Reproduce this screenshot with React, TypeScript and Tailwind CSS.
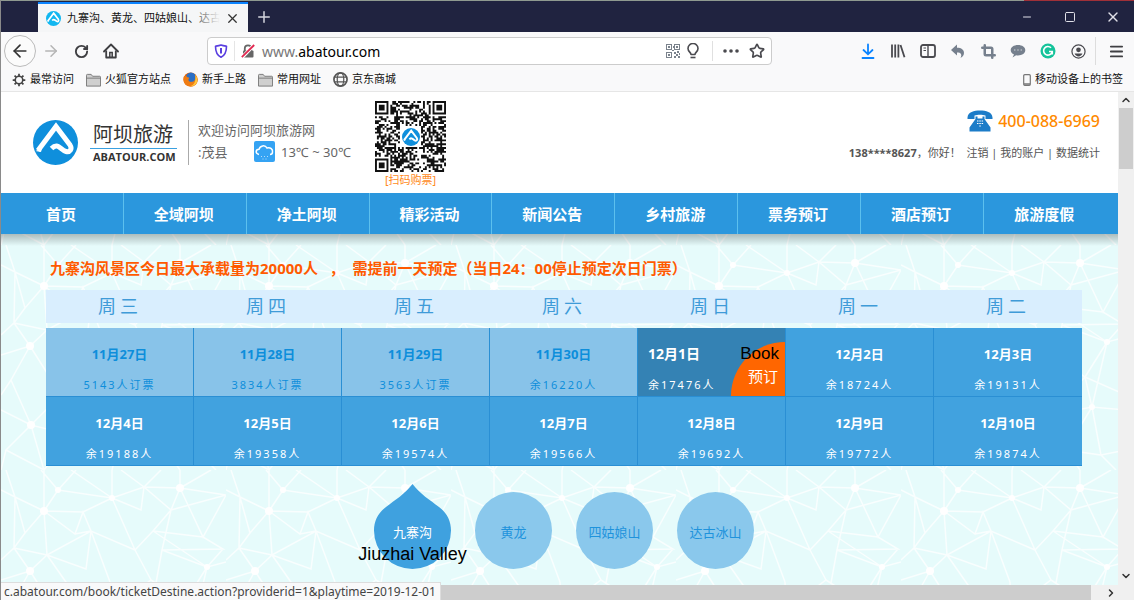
import React from 'react';
import { ArrowLeft, ArrowRight, ChevronDown, ChevronRight, ChevronUp, Crop, Menu, Minus, Plus, RotateCw, Square, Star, X } from 'lucide-react';

const navItems = ['首页', '全域阿坝', '净土阿坝', '精彩活动', '新闻公告', '乡村旅游', '票务预订', '酒店预订', '旅游度假'];

const weekdays = ['周三', '周四', '周五', '周六', '周日', '周一', '周二'];

interface Day {
  date: string;
  count: string;
  state?: 'past' | 'active';
}

const weeks: Day[][] = [
  [
    { date: '11月27日', count: '5143人订票', state: 'past' },
    { date: '11月28日', count: '3834人订票', state: 'past' },
    { date: '11月29日', count: '3563人订票', state: 'past' },
    { date: '11月30日', count: '余16220人', state: 'past' },
    { date: '12月1日', count: '余17476人', state: 'active' },
    { date: '12月2日', count: '余18724人' },
    { date: '12月3日', count: '余19131人' },
  ],
  [
    { date: '12月4日', count: '余19188人' },
    { date: '12月5日', count: '余19358人' },
    { date: '12月6日', count: '余19574人' },
    { date: '12月7日', count: '余19566人' },
    { date: '12月8日', count: '余19692人' },
    { date: '12月9日', count: '余19772人' },
    { date: '12月10日', count: '余19874人' },
  ],
];

function LogoMark({ className, color = '#0f8fdc' }: { className: string; color?: string }) {
  return (
    <svg viewBox="0 0 45 45" className={className} aria-hidden="true">
      <circle cx="22.5" cy="22.5" r="22.5" fill={color} />
      <path
        d="M5 30.5 L23 6.5 L37 25 C39.5 29 37 32.5 33 31.5 C29 30.5 27 26.500 24 26 C21.500 25.500 20 27 18.500 28.500"
        fill="none"
        stroke="#fff"
        strokeWidth="5"
        strokeLinejoin="miter"
      />
      <path d="M2.500 31 L9 28 L8 32Z" fill="#fff" />
    </svg>
  );
}

function Folder() {
  return (
    <svg viewBox="0 0 16 14" className="h-[14px] w-[15px]" fill="#cfcfcf" stroke="#777" strokeWidth="1">
      <path d="M.5 13.500V2A1 1 0 0 1 1.500 1h4l1.500 2h7.500a1 1 0 0 1 1 1v9.500z" />
      <path d="M.5 5h15" />
    </svg>
  );
}

function Firefox() {
  return (
    <svg viewBox="0 0 16 16" className="h-[15px] w-[15px]">
      <circle cx="8" cy="8" r="7.500" fill="#e66000" />
      <circle cx="8.500" cy="6" r="5.500" fill="#2b6fc4" />
      <path d="M.8 5C2 3.500 3.500 4 4.500 5.500c2 0 2.500 1 1.500 2-1 1.500 1 3.500 3.500 3 3-.5 4.500-3 3.500-7.500 3.500 3.500 3.300 8 .5 10.500-3.500 3-9 2.500-11.500-1C.3 10 .2 7.500.8 5z" fill="#ef7b12" />
      <path d="M13 3c3 3.500 3 8 .3 10.300-1.500 1.500-4 2-5.300 1.700 4-1 6-5 5-12z" fill="#ffc63b" />
    </svg>
  );
}

function Gear() {
  return (
    <svg viewBox="0 0 16 16" className="h-[14px] w-[14px]" fill="none" stroke="#444">
      <circle cx="8" cy="8" r="4.300" strokeWidth="1.800" />
      <path d="M8 .8v2.700M8 12.500v2.700M.8 8h2.700M12.500 8h2.700M2.900 2.900l1.900 1.900M11.200 11.200l1.900 1.900M2.900 13.100l1.900-1.900M11.200 4.800l1.900-1.900" strokeWidth="2" />
    </svg>
  );
}

function Globe() {
  return (
    <svg viewBox="0 0 16 16" className="h-[15px] w-[15px]" fill="none" stroke="#555" strokeWidth="1.300">
      <circle cx="8" cy="8" r="7" strokeWidth="1.800" />
      <ellipse cx="8" cy="8" rx="3.500" ry="7" />
      <path d="M1.500 5.500h13M1.500 10.500h13" />
    </svg>
  );
}

function HomeIcon() {
  return (
    <svg viewBox="0 0 16 16" className="h-4 w-4" fill="none" stroke="#3f3f42" strokeWidth="1.800">
      <path d="M1 8.500 8 1.500l7 7" strokeLinecap="round" strokeLinejoin="round" />
      <path d="M3.200 7.500v7h9.600v-7" strokeLinejoin="round" />
      <path d="M6.800 14V9.500h2.400V14" strokeWidth="1.500" />
    </svg>
  );
}

function TrackingShield() {
  return (
    <svg viewBox="0 0 14 14" className="h-[14px] w-[14px]" fill="none" stroke="#5a3fe0" strokeWidth="1.600">
      <path d="M7 1C5 1.800 3 2 1.500 2.200c0 5.300.8 8.800 5.500 11 4.700-2.200 5.500-5.700 5.500-11C11 2 9 1.800 7 1z" strokeLinejoin="round" />
      <path d="M7 4v5.500" strokeWidth="2" />
    </svg>
  );
}

function InsecureLock() {
  return (
    <svg viewBox="0 0 14 14" className="h-[14px] w-[14px]" fill="none">
      <path d="M3.800 7V4.500a3.200 3.200 0 0 1 6.400 0V7" stroke="#666" strokeWidth="1.800" />
      <rect x="2" y="6.500" width="10.500" height="7" rx="1" fill="#666" />
      <path d="M1 13.500 13 1" stroke="#fff" strokeWidth="3.500" />
      <path d="M.8 13.200 13.200 1" stroke="#e22850" strokeWidth="1.800" />
    </svg>
  );
}

function SmallQr() {
  return (
    <svg viewBox="0 0 14 14" className="h-[14px] w-[14px]" fill="#7a828c">
      <path d="M0 0h6v6H0zM1 1v4h4V1zM8 0h6v6H8zM9 1v4h4V1zM0 8h6v6H0zM1 9v4h4V9z" fillRule="evenodd" />
      <path d="M2 2h2v2H2zM10 2h2v2h-2zM2 10h2v2H2zM7 2h1v2H7zM8 8h2v2H8zM11 7h2v2h-2zM10 10h2v2h-2zM12 12h2v2h-2zM8 12h2v2H8zM13 9h1v2h-1zM6 6h2v1H6z" />
    </svg>
  );
}

function Bulb() {
  return (
    <svg viewBox="0 0 14 16" className="h-4 w-[14px]" fill="none" stroke="#4a4a4f" strokeWidth="1.600">
      <path d="M5 11.500C5 9.500 2 8.500 2 5.500a5 5 0 0 1 10 0c0 3-3 4-3 6z" strokeLinejoin="round" />
      <path d="M4.500 14.500h5" />
    </svg>
  );
}

function ToolbarIcons() {
  return (
    <>
      <button aria-label="下载" className="flex w-[30px] justify-center">
        <svg viewBox="0 0 16 16" className="h-4 w-4" fill="none" stroke="#0a84ff" strokeWidth="1.800" strokeLinecap="round">
          <path d="M8 1.500v9.500M3.500 7 8 11.300 12.500 7M2.500 15h11" />
        </svg>
      </button>
      <button aria-label="书库" className="flex w-[30px] justify-center">
        <svg viewBox="0 0 16 16" className="h-4 w-4" fill="none" stroke="#4a4a4f" strokeWidth="1.800">
          <path d="M2 1.500v13M5.200 1.500v13M8.400 1.500v13M10.500 2l4 12.300" />
        </svg>
      </button>
      <button aria-label="侧栏" className="flex w-[30px] justify-center">
        <svg viewBox="0 0 16 16" className="h-4 w-4" fill="none" stroke="#4a4a4f" strokeWidth="1.800">
          <rect x="1" y="2" width="14" height="12" rx="2" />
          <path d="M8 2v12" strokeWidth="1.400" />
          <path d="M3.500 5h2.500M3.500 7.500h2.500" strokeWidth="1" />
        </svg>
      </button>
      <button aria-label="撤销" className="flex w-[30px] justify-center">
        <svg viewBox="0 0 16 16" className="h-4 w-4" fill="#76808d">
          <path d="M7 1.500v3.300c4.500 0 7 2 7 5.200 0 2.200-1.500 4-3.500 5 1.800-3.500.5-5.500-3.500-5.500V12.500L1 7z" />
        </svg>
      </button>
      <button aria-label="截图" className="flex w-[30px] justify-center">
        <Crop className="h-[15px] w-[15px] text-[#76808d]" strokeWidth={4} />
      </button>
      <button aria-label="消息" className="flex w-[30px] justify-center">
        <svg viewBox="0 0 16 16" className="h-4 w-4">
          <path d="M8 2c4.200 0 7.300 2.200 7.300 5.200S12.200 12.400 8 12.400c-.7 0-1.300 0-1.900-.2L2.500 14.500 4 11.500C2 10.500.7 9 .7 7.200.7 4.200 3.800 2 8 2z" fill="#76808d" />
          <path d="M4.300 6.600h1v1h-1zM7.500 6.600h1v1h-1zM10.700 6.600h1v1h-1z" fill="#f9f9fa" />
        </svg>
      </button>
      <button aria-label="语法检查" className="flex w-[30px] justify-center">
        <svg viewBox="0 0 16 16" className="h-4 w-4" fill="none">
          <circle cx="8" cy="8" r="7.500" fill="#15c39a" />
          <path d="M11 4.800A4.300 4.300 0 1 0 12 9.200M9 8.500h3.300v3" stroke="#fff" strokeWidth="1.600" />
        </svg>
      </button>
      <button aria-label="账户" className="flex w-[30px] justify-center">
        <svg viewBox="0 0 16 16" className="h-[15px] w-[15px]" fill="none">
          <circle cx="8" cy="8" r="7" stroke="#4a4a4f" strokeWidth="1.300" />
          <circle cx="8" cy="6.200" r="2.500" fill="#4a4a4f" />
          <path d="M3.800 10.200h8.400c-.8 2-2.300 3-4.200 3s-3.400-1-4.200-3z" fill="#4a4a4f" />
        </svg>
      </button>
    </>
  );
}

const QR_SIZE = 37;

function inFinder(x: number, y: number) {
  return (x < 8 && y < 8) || (x > QR_SIZE - 9 && y < 8) || (x < 8 && y > QR_SIZE - 9);
}

function QrCode() {
  const cells: string[] = [];
  let seed = 20191;
  for (let y = 0; y < QR_SIZE; y++) {
    for (let x = 0; x < QR_SIZE; x++) {
      seed = (seed * 16807) % 2147483647;
      const center = x > 12 && x < 24 && y > 12 && y < 24;
      if (!inFinder(x, y) && !center && seed / 2147483647 < 0.52) cells.push(`M${x} ${y}h1v1h-1z`);
    }
  }
  const finder = (x: number, y: number) => `M${x} ${y}h7v7h-7zm1 1v5h5v-5zm1 1h3v3h-3z`;
  return (
    <div className="relative h-[71px] w-[71px]">
      <svg viewBox={`0 0 ${QR_SIZE} ${QR_SIZE}`} className="h-full w-full" role="img" aria-label="扫码购票">
        <path d={cells.join('')} fill="#111" />
        <path d={finder(0, 0) + finder(QR_SIZE - 7, 0) + finder(0, QR_SIZE - 7)} fill="#111" fillRule="evenodd" />
      </svg>
      <span className="absolute inset-0 flex items-center justify-center">
        <LogoMark className="h-[18px] w-[18px]" />
      </span>
    </div>
  );
}

// Repeating net of white lines behind the booking area
function NetBackground() {
  return (
    <svg className="absolute inset-0 h-full w-full" aria-hidden="true">
      <defs>
        <pattern id="net" width="225" height="225" patternUnits="userSpaceOnUse" patternTransform="translate(0 11)">
          <g stroke="#fff" strokeWidth="1.500" fill="none" strokeOpacity=".75">
            <path d="M43 41 57 20 111 28 143 17 179 18 225 25M43 41 14 27 0 20M43 41 82 42 111 28M43 41 74 64 82 42 90 61 74 64M43 41 24 63 14 27 13 78 24 63M43 41 46 85 90 61 134 80 111 28 140 40 143 17 170 40 179 18 202 67 225 25 170 40 152 61 134 80M170 40 161 80 222 79 202 67 152 61 206 97 161 80 155 113M13 78 46 85 85 99 90 61 109 112M46 85 29 101 13 78 0 90M46 85 67 115M134 80 150 110M206 97 222 79M206 97 184 132 191 162 206 97 225 92M29 101 0 110M29 101 10 135 30 180 60 150 29 101M10 135 0 150M30 180 0 165M30 180 5 205 43 225 30 180 70 190 60 150 110 140 67 115M70 190 43 225M5 205 0 225M109 112 110 140 150 110 184 132 150 170 110 140 120 190 70 190M150 170 120 190 165 205 191 162 150 170M165 205 200 210 191 162 225 165M200 210 225 205M184 132 225 150M165 205 179 225M120 190 111 225M200 210 215 225M43 0 43 41M111 0 111 28M111 28 70 0M57 20 40 0M57 20 75 0M143 17 120 0M143 17 160 0M179 18 179 0M179 18 210 0M14 27 5 0" />
          </g>
          <g fill="#fff">
            <circle cx="43" cy="41" r="4" />
            <circle cx="179" cy="18" r="4" />
            <circle cx="29" cy="101" r="4" />
            <circle cx="30" cy="180" r="4" />
            <circle cx="57" cy="20" r="3" />
            <circle cx="111" cy="28" r="3" />
            <circle cx="206" cy="97" r="3" />
            <circle cx="191" cy="162" r="3" />
          </g>
        </pattern>
      </defs>
      <rect width="100%" height="100%" fill="url(#net)" />
    </svg>
  );
}

function BrowserChrome() {
  return (
    <>
      <div className="flex h-px bg-[#8f9a90]">
        <span className="ml-auto w-[110px] bg-[#a03038]" />
      </div>
      <div className="flex h-[31px] items-stretch bg-[#202340] pl-[37px]">
        <div className="mt-px flex w-[210px] items-center border-t-2 border-[#0a84ff] bg-[#f5f6f7] pr-2 pl-2">
          <LogoMark className="h-[15px] w-[15px] shrink-0" color="#12b7f0" />
          <span className="relative ml-[6px] flex-1 overflow-hidden text-[11px] whitespace-nowrap text-[#111]">
            九寨沟、黄龙、四姑娘山、达古
            <span className="absolute inset-y-0 right-0 w-8 bg-linear-to-r from-transparent to-[#f5f6f7]" />
          </span>
          <button aria-label="关闭标签页" className="ml-[5px]">
            <X className="h-[15px] w-[15px] text-[#333]" />
          </button>
        </div>
        <button aria-label="新标签页" className="flex w-8 items-center justify-center">
          <Plus className="h-[18px] w-[18px] text-[#d5d6de]" />
        </button>
        <div className="ml-auto flex text-[#e0e0e8]">
          <button aria-label="最小化" className="flex w-[43px] items-center justify-center">
            <Minus className="h-3 w-3" />
          </button>
          <button aria-label="最大化" className="flex w-[43px] items-center justify-center">
            <Square className="h-3 w-3" />
          </button>
          <button aria-label="关闭" className="flex w-[43px] items-center justify-center">
            <X className="h-4 w-4" />
          </button>
        </div>
      </div>

      <div className="flex h-[38px] items-center bg-[#f9f9fa] pl-[3px]">
        <button aria-label="后退" className="flex h-8 w-8 items-center justify-center rounded-full border border-[#bbb] bg-[#fbfbfb]">
          <ArrowLeft className="h-5 w-5 text-[#333]" />
        </button>
        <button aria-label="前进" className="flex w-[30px] justify-center">
          <ArrowRight className="h-[18px] w-[18px] text-[#b5b5b5]" />
        </button>
        <button aria-label="刷新" className="flex w-[30px] justify-center">
          <RotateCw className="h-[15px] w-[15px] text-[#3f3f42]" strokeWidth={3} />
        </button>
        <button aria-label="主页" className="flex w-[30px] justify-center">
          <HomeIcon />
        </button>
        <div className="mx-[81px] flex h-7 flex-1 items-center rounded-sm border border-[#ccc] bg-white px-[6px]">
          <TrackingShield />
          <span className="mx-[6px] h-5 w-px bg-[#e5e5e5]" />
          <InsecureLock />
          <label htmlFor="url" className="ml-[7px] text-[14px] text-[#777]">www.</label>
          <input id="url" type="text" defaultValue="abatour.com" className="min-w-0 flex-1 text-[14px] text-black outline-none" />
          <SmallQr />
          <span className="w-[6px]" />
          <Bulb />
          <span className="mr-[10px] ml-3 h-5 w-px bg-[#e0e0e0]" />
          <svg viewBox="0 0 16 4" className="h-1 w-4" fill="#4a4a4f">
            <circle cx="2" cy="2" r="1.800" />
            <circle cx="8" cy="2" r="1.800" />
            <circle cx="14" cy="2" r="1.800" />
          </svg>
          <Star className="ml-[10px] h-4 w-4 text-[#4a4a4f]" strokeWidth={2.5} />
        </div>
        <ToolbarIcons />
        <span className="mx-[2px] h-7 w-px bg-[#ddd]" />
        <button aria-label="菜单" className="flex w-[36px] justify-center">
          <Menu className="h-[17px] w-[17px] text-[#3f3f42]" strokeWidth={2.5} />
        </button>
      </div>

      <div className="flex h-[22px] items-center gap-3 border-b border-[#e6e6e6] bg-[#f9f9fa] pr-[11px] pb-[2px] pl-[11px] text-[11px] text-[#111]">
        <a href="#" className="flex items-center gap-1"><Gear />最常访问</a>
        <a href="#" className="flex items-center gap-1"><Folder />火狐官方站点</a>
        <a href="#" className="flex items-center gap-1"><Firefox />新手上路</a>
        <a href="#" className="flex items-center gap-1"><Folder />常用网址</a>
        <a href="#" className="flex items-center gap-1"><Globe />京东商城</a>
        <a href="#" className="ml-auto flex items-center gap-1">
          <svg viewBox="0 0 8 12" className="h-3 w-2" fill="none" stroke="#777">
            <rect x=".7" y=".7" width="6.600" height="10.600" rx="1" strokeWidth="1.200" />
            <path d="M1 10h6" strokeWidth="1.500" />
          </svg>
          移动设备上的书签
        </a>
      </div>
    </>
  );
}

function SiteHeader() {
  return (
    <header className="flex h-[101px] items-center bg-white pr-[18px] pl-8">
      <a href="#" className="flex items-center gap-3 text-[#333]">
        <LogoMark className="h-[45px] w-[45px]" />
        <span className="flex w-[87px] flex-col">
          <span className="border-b border-[#3aa0e0] px-[3px] text-[20px] leading-[26px] whitespace-nowrap">阿坝旅游</span>
          <span className="px-[3px] font-['Open_Sans',sans-serif] text-[11px] leading-[15px] font-bold">ABATOUR.COM</span>
        </span>
      </a>
      <div className="ml-[11px] h-[45px] border-l border-[#aaa]" />
      <div className="ml-[9px] w-[177px] pb-1 leading-[22px] text-[#666]">
        <p className="text-[13px]">欢迎访问阿坝旅游网</p>
        <div className="flex items-center text-[13px]">
          <span className="w-14">:茂县</span>
          <svg viewBox="0 0 21 21" className="h-[21px] w-[21px]">
            <rect width="21" height="21" rx="2" fill="#35a3f3" />
            <path d="M5 13.500C1 12.500 1.500 8.500 5 8.300 6 4.500 11 3.500 13 7c3.500-1 6 1.500 5.500 4 0 1.500-1 2.500-2.500 2.500" fill="none" stroke="#fff" strokeWidth="1.500" />
            <path d="M7 15.500h1M10 15.500h1M13 15.500h1M8.500 18h1M11.500 18h1" stroke="#b5dcfa" />
          </svg>
          <span className="ml-[6px] whitespace-nowrap">13℃ ~ 30℃</span>
        </div>
      </div>
      <div className="flex flex-col items-center pt-1">
        <QrCode />
        <a href="#" className="text-[11px] leading-4 text-[#ff8a1c]">[扫码购票]</a>
      </div>
      <div className="ml-auto flex flex-col items-end pb-3 text-[11px] leading-8 text-[#555]">
        <p className="flex items-center gap-[5px] text-[16px] font-medium text-[#ff8a00]">
          <svg viewBox="0 0 26 22" className="h-[22px] w-[26px]" fill="#1c7cc8">
            <path d="M.5 7.500C1 2 7 .5 13 .5S25 2 25.500 7.500V9h-7V5.500c-3-1-8-1-11 0V9h-7z" />
            <path d="M8.500 6.500h2v2h5v-2h2V9l6 8.500V21.500h-21V17.500L8.500 9z" />
            <path d="M10 11h1.500M12.300 11h1.500M14.600 11h1.500M10 13.500h1.500M12.300 13.500h1.500M14.600 13.500h1.500M12.300 16h1.500" stroke="#fff" strokeWidth="1.200" />
          </svg>
          400-088-6969
        </p>
        <p className="whitespace-nowrap">
          <b>138****8627</b>，你好！ &nbsp;<a href="#">注销</a> | <a href="#">我的账户</a> | <a href="#">数据统计</a>
        </p>
      </div>
    </header>
  );
}

function DayCell({ day }: { day: Day }) {
  if (day.state === 'active') {
    return (
      <td className="relative h-[69px] border-r border-b border-[#2a8fd4] bg-[#3482b4] p-0 pl-[10px] text-left align-top text-white">
        <p className="mt-4 text-[14px] leading-5 font-bold">{day.date}</p>
        <p className="mt-[11px] text-[11px] leading-5 tracking-[2px]">{day.count}</p>
        <button className="absolute right-0 bottom-0 flex h-[54px] w-[54px] items-end justify-end rounded-tl-full bg-[#ff6600] pr-[7px] pb-[10px] text-[15px] leading-5 text-white">
          预订
        </button>
        <span className="absolute top-4 right-[6px] font-['Liberation_Sans',sans-serif] text-[17px] leading-5 text-black">Book</span>
      </td>
    );
  }
  const past = day.state === 'past';
  return (
    <td
      className={`h-[69px] border-r border-b border-[#2a8fd4] p-0 text-center align-top last:border-r-0 ${
        past ? 'bg-[#88c3e9] text-[#0d8edb]' : 'bg-[#41a2df] text-white'
      }`}
    >
      <p className="mt-4 text-[13px] leading-5 font-bold">{day.date}</p>
      <p className="mt-[11px] text-[11px] leading-5 tracking-[2px]">{day.count}</p>
    </td>
  );
}

function Booking() {
  return (
    <main className="relative flex-1 overflow-hidden bg-[#e6fbfb]">
      <NetBackground />
      <div className="absolute inset-x-0 top-0 h-3 bg-linear-to-b from-black/25 to-transparent" />
      <div className="relative pt-6 pr-9 pl-[45px]">
        <p className="mb-3 pl-1 text-[15px] leading-5 font-bold whitespace-nowrap text-[#ff5a00]">
          九寨沟风景区今日最大承载量为20000人&nbsp;&nbsp; ，&nbsp; 需提前一天预定（当日24：00停止预定次日门票）
        </p>
        <table className="w-full table-fixed border-separate border-spacing-0">
          <thead>
            <tr>
              {weekdays.map((d) => (
                <th key={d} className="h-[38px] border-b-[5px] border-transparent bg-[#d9eefe] bg-clip-padding p-0 text-[18px] font-normal tracking-[4px] text-[#3f9bd8]">
                  {d}
                </th>
              ))}
            </tr>
          </thead>
          <tbody>
            {weeks.map((week) => (
              <tr key={week[0].date}>
                {week.map((day) => (
                  <DayCell key={day.date} day={day} />
                ))}
              </tr>
            ))}
          </tbody>
        </table>
        <div className="mt-[18px] flex items-end justify-center gap-6 text-[13px] text-[#1f93dc]">
          <button className="relative h-[85px] w-[77px] text-white">
            <svg viewBox="0 0 77 85" className="absolute inset-0 h-full w-full" fill="#3fa1df">
              <path d="M38.500 0C46 10 56 16 65 23c8 6 12 14 12 23.500A38.500 38.500 0 0 1 0 46.500C0 37 4 29 12 23 21 16 31 10 38.500 0z" />
            </svg>
            <span className="relative block pt-3">九寨沟</span>
            <span className="absolute top-[60px] left-1/2 -translate-x-1/2 font-['Liberation_Sans',sans-serif] text-[18px] leading-5 whitespace-nowrap text-black">
              Jiuzhai Valley
            </span>
          </button>
          {['黄龙', '四姑娘山', '达古冰山'].map((name) => (
            <button key={name} className="h-[77px] w-[77px] rounded-full bg-[#8ac8ec] pt-1 whitespace-nowrap">
              {name}
            </button>
          ))}
        </div>
      </div>
    </main>
  );
}

export default function App() {
  return (
    <div className="relative flex h-screen flex-col overflow-hidden border-l border-[#8a8a8a] bg-white font-['Noto_Sans','Noto_Sans_CJK_SC',sans-serif]">
      <BrowserChrome />
      <div className="flex min-h-0 flex-1">
        <div className="flex min-w-0 flex-1 flex-col">
          <SiteHeader />
          <nav className="flex h-[41px] bg-[#2b97dd] text-[15px] font-bold text-white">
            {navItems.map((item) => (
              <a key={item} href="#" className="flex w-[11%] items-center justify-center border-r border-[#5cc0ee] pt-[2px] pr-[2px] last:border-r-0">
                {item}
              </a>
            ))}
          </nav>
          <Booking />
        </div>
        <div className="flex w-4 flex-col items-center bg-[#f0f0f0] text-[#333]">
          <ChevronUp className="my-[2px] h-3 w-3" strokeWidth={3} />
          <div className="h-[61px] w-[14px] bg-[#cdcdcd]" />
          <ChevronDown className="mt-auto mb-[3px] h-3 w-3" strokeWidth={3} />
        </div>
      </div>
      <div className="flex h-[15px] items-center bg-[#f0f0f0] pr-[17px]">
        <div className="h-full flex-1 bg-[#cdcdcd]" />
        <span className="flex w-[26px] justify-end">
          <ChevronRight className="h-3 w-3 text-[#333]" strokeWidth={3} />
        </span>
      </div>
      <div className="absolute bottom-0 left-0 h-[18px] border-t border-r border-[#ddd] bg-[#f9f9fa] pr-1 pl-[3px] text-[12px] leading-[17px] whitespace-nowrap text-[#444]">
        c.abatour.com/book/ticketDestine.action?providerid=1&amp;playtime=2019-12-01
      </div>
    </div>
  );
}
